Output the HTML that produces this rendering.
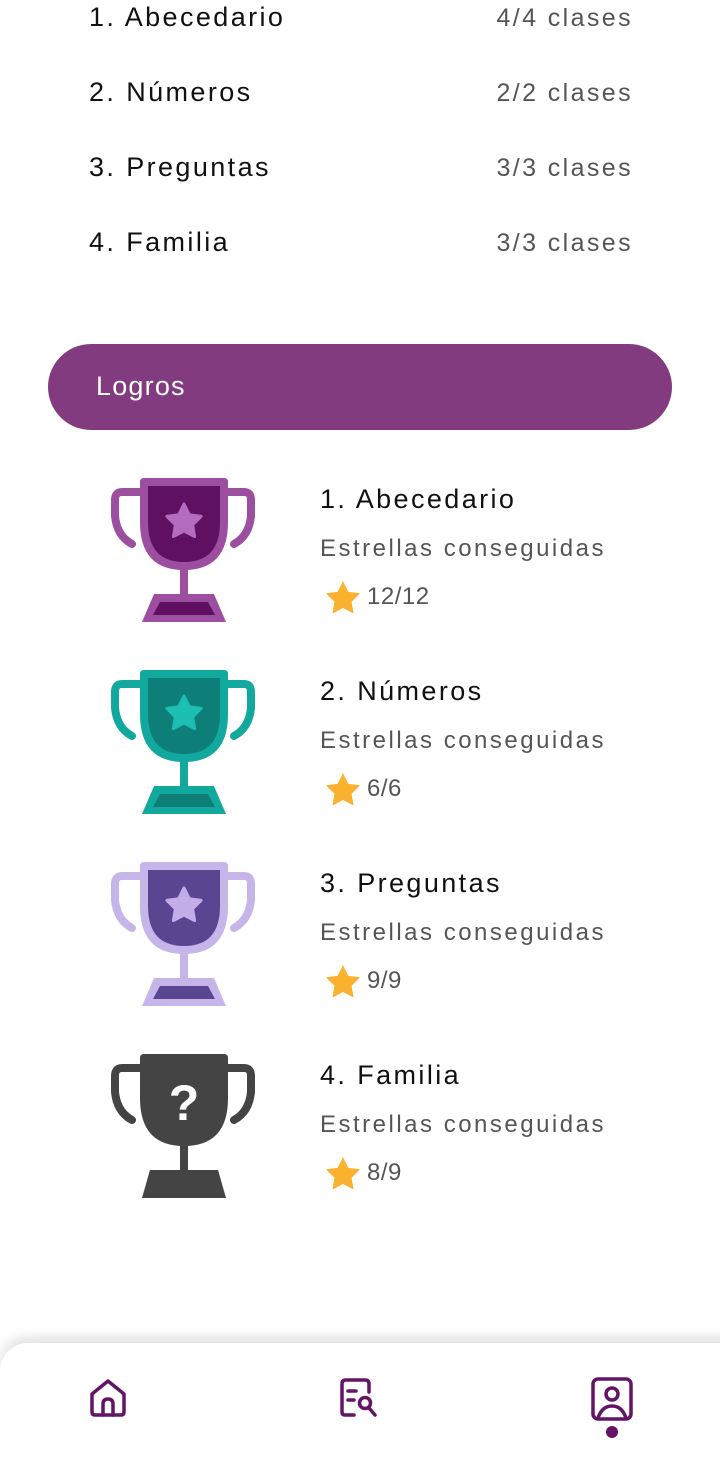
<!DOCTYPE html>
<html><head><meta charset="utf-8"><style>
body{margin:0;width:720px;height:1455px;background:#fff;position:relative;overflow:hidden;font-family:"Liberation Sans",sans-serif}
.t{position:absolute;white-space:nowrap}
.l{left:89px;font-size:27px;color:#111;letter-spacing:2.4px}
.r{right:87px;font-size:25px;color:#555;letter-spacing:2.4px}
.h{left:320px;font-size:27px;color:#111;letter-spacing:2.4px}
.s{left:320px;font-size:24px;color:#555;letter-spacing:2.5px}
.n{left:367px;font-size:24px;color:#555;letter-spacing:0.5px}
svg{position:absolute}
</style></head><body>
<div class="t l" style="top:2px">1. Abecedario</div><div class="t r" style="top:4px">4/4 clases</div>
<div class="t l" style="top:77px">2. Números</div><div class="t r" style="top:79px">2/2 clases</div>
<div class="t l" style="top:152px">3. Preguntas</div><div class="t r" style="top:154px">3/3 clases</div>
<div class="t l" style="top:227px">4. Familia</div><div class="t r" style="top:229px">3/3 clases</div>

<div style="position:absolute;left:48px;top:344px;width:624px;height:86px;border-radius:43px;background:#833b7f"></div>
<div class="t" style="left:96px;top:371px;color:#fff;font-size:27px;letter-spacing:1.2px">Logros</div>

<svg width="0" height="0"><defs>
<path id="st" d="M0,-18 L5.3,-7.3 17.1,-5.6 8.6,2.8 10.6,14.6 0,9 -10.6,14.6 -8.6,2.8 -17.1,-5.6 -5.3,-7.3Z" stroke-linejoin="round"/>
</defs></svg>

<svg style="left:110px;top:478px" width="146" height="146" viewBox="0 0 146 146">
<path d="M32 14H12Q5 14 5 22V38Q7 58 22 66M114 14H134Q141 14 141 22V38Q139 58 124 66" fill="none" stroke="#9b4f9e" stroke-width="8" stroke-linecap="round"/>
<path d="M34 0H114Q118 0 118 4V44Q118 92 74 92Q30 92 30 44V4Q30 0 34 0Z" fill="#9b4f9e"/>
<path d="M38 8H110V44Q110 84 74 84Q38 84 38 44Z" fill="#5f1060"/>
<use href="#st" transform="translate(74,44)" fill="#b36cbf" stroke="#b36cbf" stroke-width="3"/>
<rect x="70" y="90" width="8" height="28" fill="#9b4f9e"/>
<path d="M44 116H104L116 144H32Z" fill="#9b4f9e"/><path d="M50 124H98L105 137H43Z" fill="#5f1060"/>
</svg>
<svg style="left:110px;top:670px" width="146" height="146" viewBox="0 0 146 146">
<path d="M32 14H12Q5 14 5 22V38Q7 58 22 66M114 14H134Q141 14 141 22V38Q139 58 124 66" fill="none" stroke="#13a89e" stroke-width="8" stroke-linecap="round"/>
<path d="M34 0H114Q118 0 118 4V44Q118 92 74 92Q30 92 30 44V4Q30 0 34 0Z" fill="#13a89e"/>
<path d="M38 8H110V44Q110 84 74 84Q38 84 38 44Z" fill="#0e7f78"/>
<use href="#st" transform="translate(74,44)" fill="#1dbfb3" stroke="#1dbfb3" stroke-width="3"/>
<rect x="70" y="90" width="8" height="28" fill="#13a89e"/>
<path d="M44 116H104L116 144H32Z" fill="#13a89e"/><path d="M50 124H98L105 137H43Z" fill="#0e7f78"/>
</svg>
<svg style="left:110px;top:862px" width="146" height="146" viewBox="0 0 146 146">
<path d="M32 14H12Q5 14 5 22V38Q7 58 22 66M114 14H134Q141 14 141 22V38Q139 58 124 66" fill="none" stroke="#c6b5e8" stroke-width="8" stroke-linecap="round"/>
<path d="M34 0H114Q118 0 118 4V44Q118 92 74 92Q30 92 30 44V4Q30 0 34 0Z" fill="#c6b5e8"/>
<path d="M38 8H110V44Q110 84 74 84Q38 84 38 44Z" fill="#5a4690"/>
<use href="#st" transform="translate(74,44)" fill="#c2ade8" stroke="#c2ade8" stroke-width="3"/>
<rect x="70" y="90" width="8" height="28" fill="#c6b5e8"/>
<path d="M44 116H104L116 144H32Z" fill="#c6b5e8"/><path d="M50 124H98L105 137H43Z" fill="#5a4690"/>
</svg>
<svg style="left:110px;top:1054px" width="146" height="146" viewBox="0 0 146 146">
<path d="M32 14H12Q5 14 5 22V38Q7 58 22 66M114 14H134Q141 14 141 22V38Q139 58 124 66" fill="none" stroke="#444" stroke-width="8" stroke-linecap="round"/>
<path d="M34 0H114Q118 0 118 4V44Q118 92 74 92Q30 92 30 44V4Q30 0 34 0Z" fill="#444"/>
<rect x="70" y="90" width="8" height="28" fill="#444"/>
<path d="M40 116H108L116 144H32Z" fill="#444"/>
<text x="74" y="66" text-anchor="middle" font-family="Liberation Sans" font-weight="bold" font-size="50" fill="#fff">?</text>
</svg>

<div class="t h" style="top:484px">1. Abecedario</div><div class="t s" style="top:535px">Estrellas conseguidas</div>
<svg style="left:324px;top:580px" width="38" height="38" viewBox="-19 -19 38 38"><use href="#st" fill="#fbb130"/></svg><div class="t n" style="top:583px">12/12</div>
<div class="t h" style="top:676px">2. Números</div><div class="t s" style="top:727px">Estrellas conseguidas</div>
<svg style="left:324px;top:772px" width="38" height="38" viewBox="-19 -19 38 38"><use href="#st" fill="#fbb130"/></svg><div class="t n" style="top:775px">6/6</div>
<div class="t h" style="top:868px">3. Preguntas</div><div class="t s" style="top:919px">Estrellas conseguidas</div>
<svg style="left:324px;top:964px" width="38" height="38" viewBox="-19 -19 38 38"><use href="#st" fill="#fbb130"/></svg><div class="t n" style="top:967px">9/9</div>
<div class="t h" style="top:1060px">4. Familia</div><div class="t s" style="top:1111px">Estrellas conseguidas</div>
<svg style="left:324px;top:1156px" width="38" height="38" viewBox="-19 -19 38 38"><use href="#st" fill="#fbb130"/></svg><div class="t n" style="top:1159px">8/9</div>

<div style="position:absolute;left:0;top:1343px;width:740px;height:140px;background:#fff;border-top-left-radius:28px;box-shadow:0 -6px 12px rgba(0,0,0,0.12)"></div>
<svg style="left:88px;top:1378px" width="40" height="40" viewBox="0 0 40 40" fill="none" stroke="#631466" stroke-width="3.5" stroke-linecap="round" stroke-linejoin="round">
<path d="M4 16L20 3 36 16V34Q36 37 33 37H7Q4 37 4 34Z"/><path d="M15 37V26Q15 21 20 21Q25 21 25 26V37"/></svg>
<svg style="left:339px;top:1378px" width="45" height="42" viewBox="0 0 45 42" fill="none" stroke="#631466" stroke-width="3.5" stroke-linecap="round" stroke-linejoin="round">
<path d="M30 14V6Q30 2 26 2H7Q3 2 3 6V34Q3 37 6 37H15"/><path d="M9 13H17M9 22H15"/><circle cx="26" cy="25" r="5.5"/><path d="M30 30L36 37"/></svg>
<svg style="left:590px;top:1376px" width="44" height="46" viewBox="0 0 44 46" fill="none" stroke="#631466" stroke-width="3.5" stroke-linecap="round" stroke-linejoin="round">
<rect x="3" y="3" width="38" height="40" rx="5"/><circle cx="22" cy="18" r="6"/><path d="M8 42Q12 30 22 30Q32 30 36 42"/></svg>
<div style="position:absolute;left:606px;top:1426px;width:12px;height:12px;border-radius:6px;background:#631466"></div>
</body></html>
